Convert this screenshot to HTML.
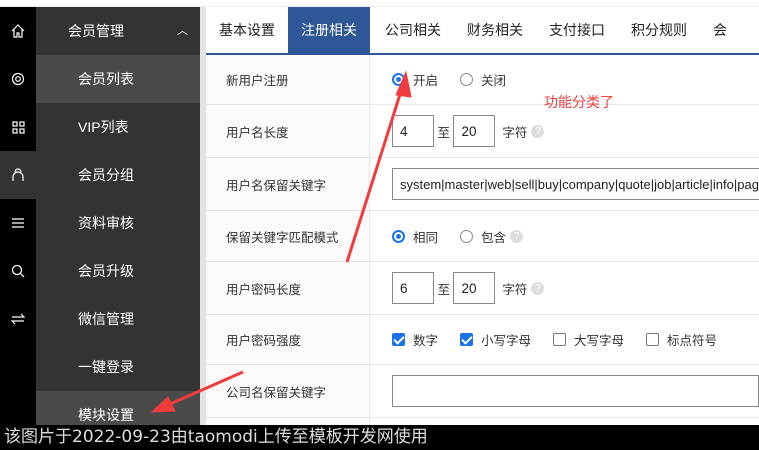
<!DOCTYPE html>
<html><head><meta charset="utf-8"><style>
*{margin:0;padding:0;box-sizing:border-box}
body{width:759px;height:450px;overflow:hidden;background:#fff;font-family:"Liberation Sans","Noto Sans CJK SC",sans-serif;position:relative;font-size:13px;color:#333}
.ib{position:absolute;left:0;top:7px;width:36px;height:443px;background:#000}
.ib div{height:48px;display:flex;align-items:center;justify-content:center}
.sb{position:absolute;left:36px;top:7px;width:164px;height:443px;background:#333}
.sb div{height:48px;line-height:48px;color:#fff;font-size:14px;padding-left:42px}
.sc{position:absolute;left:200px;top:7px;width:6px;height:443px;background:#e4e4e4}
.tabs{position:absolute;left:206px;top:7px;right:0;height:48px;border-bottom:2px solid #2d5797;white-space:nowrap}
.tabs span{display:inline-block;height:46px;line-height:46px;font-size:14px;color:#222;padding:0 13px}
.tabs span.a{background:#2d5797;color:#fff}
.row{position:absolute;left:206px;right:0;border-bottom:1px solid #e6e6e6}
.row .l{position:absolute;left:0;top:0;bottom:0;width:164px;background:#fafafa;border-right:1px solid #e6e6e6;padding-left:20px;display:flex;align-items:center;font-size:12.5px}
.row .v{position:absolute;left:186px;top:0;bottom:0;right:0;display:flex;align-items:center;font-size:12.5px;white-space:nowrap}
.in{border:1px solid #888;height:32px;display:inline-flex;align-items:center;padding-left:7px;font-size:13.5px;color:#222}
.rd{width:13px;height:13px;border:1px solid #888;border-radius:50%;display:inline-block;margin-right:8px;position:relative}
.rd.on{border:2px solid #1a73e8}.rd.on:after{content:"";position:absolute;left:2px;top:2px;width:5px;height:5px;border-radius:50%;background:#1a73e8}
.cb{width:13px;height:13px;border:1px solid #777;border-radius:2px;display:inline-block;margin-right:8px}
.cb.on{background:#1a73e8;border-color:#1a73e8;position:relative}
.cb.on:after{content:"";position:absolute;left:3px;top:0px;width:4px;height:8px;border:solid #fff;border-width:0 2px 2px 0;transform:rotate(45deg)}
.q{display:inline-block;width:13px;height:13px;border-radius:50%;background:#ddd;color:#fff;font-size:10px;text-align:center;line-height:13px;margin-left:4px;vertical-align:top}
.wm{position:absolute;left:0;top:425px;width:759px;height:25px;background:#000;color:#ddd;font-family:"DejaVu Sans","Noto Sans CJK SC",sans-serif;font-size:17px;line-height:25px;padding-left:4px;white-space:nowrap}
</style></head><body>
<div class="ib">
<div><svg width="14" height="14" viewBox="0 0 14 14" fill="none" stroke="#fff" stroke-width="1.2"><path d="M1 7L7 1l6 6M3 5v8h3V9h2v4h3V5"/></svg></div>
<div><svg width="14" height="14" viewBox="0 0 14 14" fill="none" stroke="#fff" stroke-width="1.2"><circle cx="7" cy="7" r="5.5"/><circle cx="7" cy="7" r="2.3"/></svg></div>
<div><svg width="13" height="13" viewBox="0 0 13 13" fill="none" stroke="#fff" stroke-width="1.2"><rect x="1" y="1" width="4" height="4"/><rect x="8" y="1" width="4" height="4"/><rect x="1" y="8" width="4" height="4"/><rect x="8" y="8" width="4" height="4"/></svg></div>
<div style="background:#333"><svg width="14" height="14" viewBox="0 0 14 14" fill="none" stroke="#fff" stroke-width="1.2"><path d="M2 13V9a5 5 0 0110 0v4"/><path d="M4 4a3 3 0 016 0"/></svg></div>
<div><svg width="14" height="12" viewBox="0 0 14 12" fill="none" stroke="#fff" stroke-width="1.2"><path d="M1 2h12M1 6h12M1 10h12"/></svg></div>
<div><svg width="14" height="14" viewBox="0 0 14 14" fill="none" stroke="#fff" stroke-width="1.3"><circle cx="6" cy="6" r="4.5"/><path d="M9.5 9.5L13 13"/></svg></div>
<div><svg width="14" height="12" viewBox="0 0 14 12" fill="none" stroke="#fff" stroke-width="1.2"><path d="M1 4h12L10 1M13 8H1l3 3"/></svg></div>
</div>
<div class="sb">
<div style="padding-left:32px;position:relative">会员管理<span style="position:absolute;right:12px;font-size:11px">︿</span></div>
<div style="background:#4a4a4a">会员列表</div>
<div>VIP列表</div><div>会员分组</div><div>资料审核</div><div>会员升级</div><div>微信管理</div><div>一键登录</div>
<div style="background:#4a4a4a">模块设置</div>
</div>
<div class="sc"></div>
<div style="position:absolute;left:0;top:0;width:759px;height:7px;background:#fff;border-bottom:1px solid #eee"></div>
<div class="tabs"><span>基本设置</span><span class="a">注册相关</span><span style="padding-left:15px">公司相关</span><span>财务相关</span><span>支付接口</span><span>积分规则</span><span>会</span></div>
<div class="row" style="top:55px;height:50px"><div class="l">新用户注册</div><div class="v"><span class="rd on"></span>开启<span class="rd" style="margin-left:22px"></span>关闭</div></div>
<div class="row" style="top:105px;height:53px"><div class="l">用户名长度</div><div class="v"><span class="in" style="width:42px">4</span>&nbsp;至&nbsp;<span class="in" style="width:42px">20</span>&nbsp;&nbsp;字符<span class="q">?</span></div></div>
<div class="row" style="top:158px;height:53px"><div class="l">用户名保留关键字</div><div class="v"><span class="in" style="width:400px;font-size:13px">system|master|web|sell|buy|company|quote|job|article|info|page</span></div></div>
<div class="row" style="top:211px;height:51px"><div class="l">保留关键字匹配模式</div><div class="v"><span class="rd on"></span>相同<span class="rd" style="margin-left:22px"></span>包含<span class="q">?</span></div></div>
<div class="row" style="top:262px;height:53px"><div class="l">用户密码长度</div><div class="v"><span class="in" style="width:42px">6</span>&nbsp;至&nbsp;<span class="in" style="width:42px">20</span>&nbsp;&nbsp;字符<span class="q">?</span></div></div>
<div class="row" style="top:315px;height:50px"><div class="l">用户密码强度</div><div class="v"><span class="cb on"></span>数字<span class="cb on" style="margin-left:22px"></span>小写字母<span class="cb" style="margin-left:22px"></span>大写字母<span class="cb" style="margin-left:22px"></span>标点符号</div></div>
<div class="row" style="top:365px;height:53px"><div class="l">公司名保留关键字</div><div class="v"><span class="in" style="width:400px"></span></div></div>
<div class="row" style="top:418px;height:30px"><div class="l"></div></div>
<div style="position:absolute;left:544px;top:92px;color:#f03c3c;font-size:14px">功能分类了</div>
<svg style="position:absolute;left:0;top:0" width="759" height="450"><g fill="#f03c3c" stroke="#f03c3c">
<path d="M347 262L402 88" stroke-width="3"/><path d="M406 72L396 95L411 97Z" stroke-width="1"/>
<path d="M243 372L170 404" stroke-width="3"/><path d="M152 412L168 397L175 411Z" stroke-width="1"/></g></svg>
<div class="wm">该图片于2022-09-23由taomodi上传至模板开发网使用</div>
</body></html>
